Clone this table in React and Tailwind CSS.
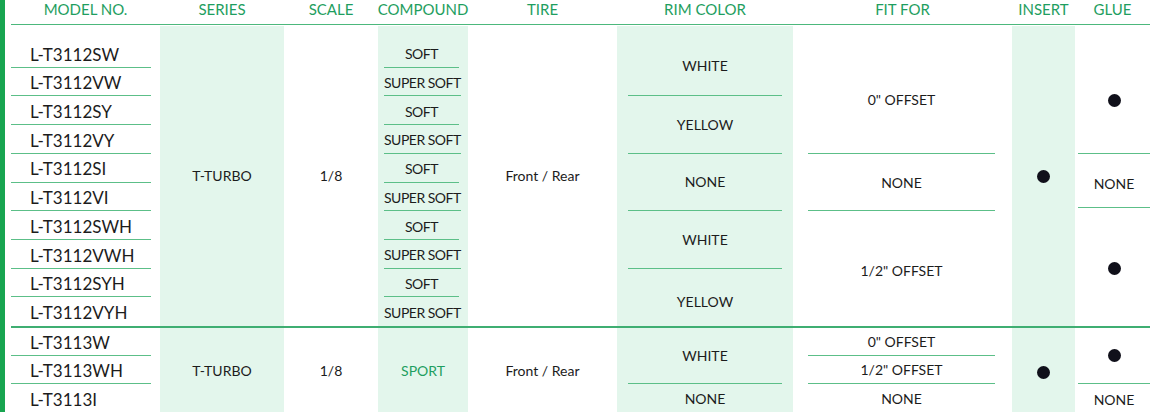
const HEAD = [
  "MODEL NO.",
  "SERIES",
  "SCALE",
  "COMPOUND",
  "TIRE",
  "RIM COLOR",
  "FIT FOR",
  "INSERT",
  "GLUE",
];

const COLS =
  "grid grid-cols-[149px_124px_94px_90px_149px_176px_219px_63px_75px]";

const line = "border-b border-[#5cbf88]";

function Dot() {
  return <span className="block w-[13px] h-[13px] rounded-full bg-[#10101a]" />;
}

function Cell({ className = "", children }) {
  return (
    <div className={`flex items-center justify-center whitespace-nowrap text-[14px] text-[#1c1c1c] ${className}`}>
      {children}
    </div>
  );
}

const group1 = [
  ["L-T3112SW", "SOFT"],
  ["L-T3112VW", "SUPER SOFT"],
  ["L-T3112SY", "SOFT"],
  ["L-T3112VY", "SUPER SOFT"],
  ["L-T3112SI", "SOFT"],
  ["L-T3112VI", "SUPER SOFT"],
  ["L-T3112SWH", "SOFT"],
  ["L-T3112VWH", "SUPER SOFT"],
  ["L-T3112SYH", "SOFT"],
  ["L-T3112VYH", "SUPER SOFT"],
];

const group2 = ["L-T3113W", "L-T3113WH", "L-T3113I"];

function ModelCell({ name, last }) {
  return (
    <div className={`flex-1 flex items-center pl-[19px] pt-[3px] mr-[9px] text-[17px] text-[#1c1c1c] ${last ? "" : line}`}>
      {name}
    </div>
  );
}

export default function App() {
  return (
    <div
      className="flex w-[1150px] h-[412px] overflow-hidden bg-white"
      style={{ fontFamily: "Lato, 'Open Sans', sans-serif" }}
    >
      <div className="w-[5px] bg-[#18a550] shrink-0" />
      <div className="ml-[6px] flex flex-col">
        {/* header */}
        <div className={`${COLS} h-[25px] border-b-[1.5px] border-[#4cb87c]`}>
          {HEAD.map((h) => (
            <div key={h} className="flex items-start justify-center whitespace-nowrap text-[15px] text-[#1e9e60] leading-[18px]">
              {h}
            </div>
          ))}
        </div>

        {/* group 1 */}
        <div className={`${COLS} grid-rows-[14px_repeat(10,minmax(0,1fr))] h-[301px]`}>
          {group1.map(([m], i) => (
            <div key={m} className="col-start-1 flex" style={{ gridRow: i + 2 }}>
              <ModelCell name={m} last={i === 9} />
            </div>
          ))}
          <div className="col-start-2 row-span-full bg-[#e3f6ec] mt-[1px]" />
          <Cell className="col-start-2 row-span-full">T-TURBO</Cell>
          <Cell className="col-start-3 row-span-full">1/8</Cell>
          <div className="col-start-4 row-span-full bg-[#e3f6ec] mt-[1px]" />
          {group1.map(([m, c], i) => (
            <div key={m + c} className="col-start-4 flex" style={{ gridRow: i + 2 }}>
              <Cell className={`flex-1 ml-[6px] mr-[9px] pt-[2px] tracking-[-0.5px] ${i === 9 ? "" : line}`}>{c}</Cell>
            </div>
          ))}
          <Cell className="col-start-5 row-span-full">Front / Rear</Cell>
          <div className="col-start-6 row-span-full bg-[#e3f6ec] mt-[1px]" />
          {["WHITE", "YELLOW", "NONE", "WHITE", "YELLOW"].map((r, i) => (
            <div key={i} className="col-start-6 flex" style={{ gridRow: `${i * 2 + 2} / span 2` }}>
              <Cell className={`flex-1 mx-[11px] ${i === 0 ? "pb-[3px]" : ""} ${i === 4 ? "pt-[8px]" : line}`}>{r}</Cell>
            </div>
          ))}
          <div className="col-start-7 row-start-2 row-span-4 flex">
            <Cell className={`flex-1 ml-[15px] mr-[17px] pt-[7px] ${line}`}>0" OFFSET</Cell>
          </div>
          <div className="col-start-7 row-start-6 row-span-2 flex">
            <Cell className={`flex-1 ml-[15px] mr-[17px] pt-[2px] ${line}`}>NONE</Cell>
          </div>
          <div className="col-start-7 row-start-8 row-span-4 flex">
            <Cell className="flex-1 ml-[15px] mr-[17px] pt-[3px]">1/2" OFFSET</Cell>
          </div>
          <div className="col-start-8 row-span-full bg-[#e3f6ec] mt-[1px]" />
          <Cell className="col-start-8 row-span-full pt-[2px]">
            <Dot />
          </Cell>
          <div className="col-start-9 row-start-2 row-span-4 flex">
            <Cell className={`flex-1 ml-[3px] pt-[10px] ${line}`}>
              <Dot />
            </Cell>
          </div>
          <div className="col-start-9 row-start-6 row-span-2 flex">
            <Cell className={`flex-1 ml-[3px] mb-[3px] pt-[6px] ${line}`}>NONE</Cell>
          </div>
          <div className="col-start-9 row-start-8 row-span-4 flex">
            <Cell className="flex-1 ml-[3px]">
              <Dot />
            </Cell>
          </div>
        </div>

        {/* group 2 */}
        <div className={`${COLS} grid-rows-[repeat(3,minmax(0,1fr))] h-[86px] border-t-2 border-[#3fae72]`}>
          {group2.map((m, i) => (
            <div key={m} className="col-start-1 flex" style={{ gridRow: i + 1 }}>
              <ModelCell name={m} last={i === 2} />
            </div>
          ))}
          <div className="col-start-2 row-span-full bg-[#e3f6ec]" />
          <Cell className="col-start-2 row-span-full">T-TURBO</Cell>
          <Cell className="col-start-3 row-span-full">1/8</Cell>
          <div className="col-start-4 row-span-full bg-[#e3f6ec]" />
          <Cell className="col-start-4 row-span-full !text-[#1e9e60]">SPORT</Cell>
          <Cell className="col-start-5 row-span-full">Front / Rear</Cell>
          <div className="col-start-6 row-span-full bg-[#e3f6ec]" />
          <div className="col-start-6 row-start-1 row-span-2 flex">
            <Cell className={`flex-1 mx-[11px] ${line}`}>WHITE</Cell>
          </div>
          <div className="col-start-6 row-start-3 flex">
            <Cell className="flex-1 mx-[11px]">NONE</Cell>
          </div>
          {[`0" OFFSET`, `1/2" OFFSET`, "NONE"].map((f, i) => (
            <div key={f} className="col-start-7 flex" style={{ gridRow: i + 1 }}>
              <Cell className={`flex-1 ml-[15px] mr-[17px] ${i === 2 ? "" : line}`}>{f}</Cell>
            </div>
          ))}
          <div className="col-start-8 row-span-full bg-[#e3f6ec]" />
          <Cell className="col-start-8 row-span-full pt-[4px]">
            <Dot />
          </Cell>
          <div className="col-start-9 row-start-1 row-span-2 flex">
            <Cell className={`flex-1 ml-[3px] ${line}`}>
              <Dot />
            </Cell>
          </div>
          <div className="col-start-9 row-start-3 flex">
            <Cell className="flex-1 ml-[3px] pt-[2px]">NONE</Cell>
          </div>
        </div>
      </div>
    </div>
  );
}
